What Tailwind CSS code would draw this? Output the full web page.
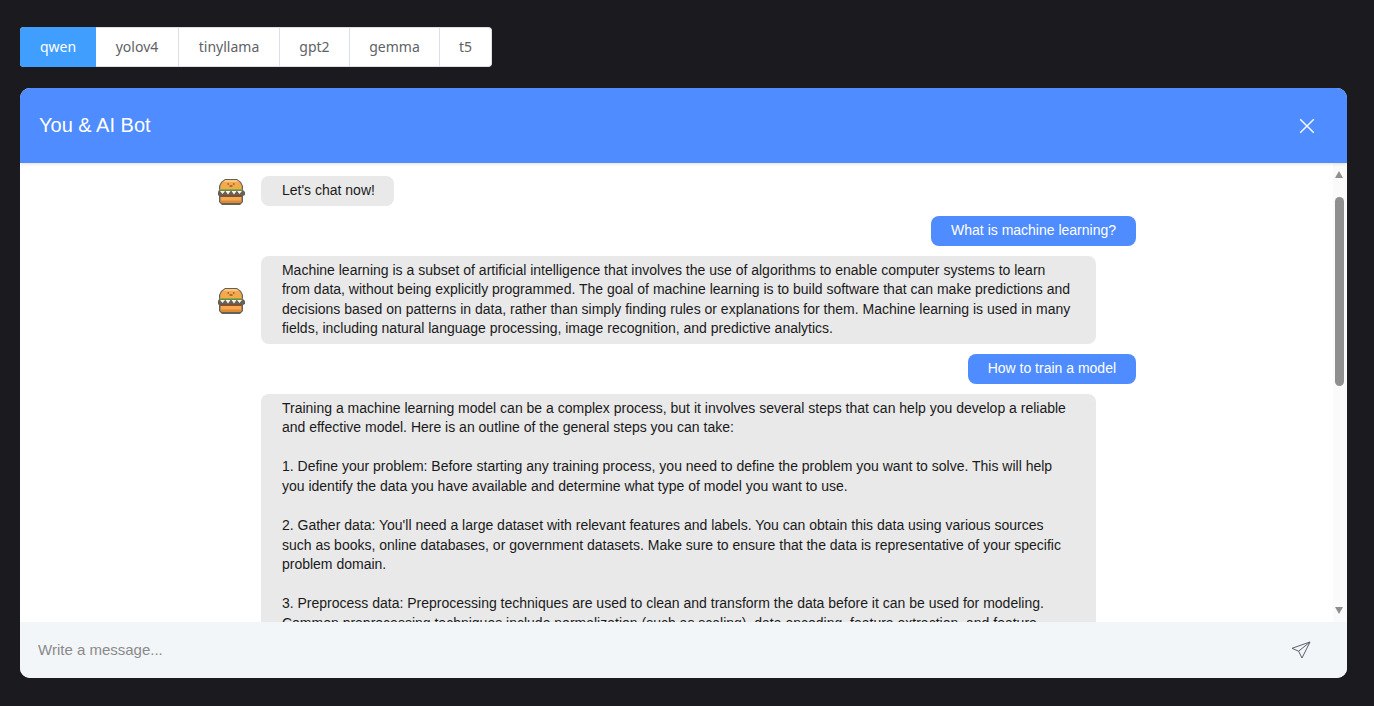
<!DOCTYPE html>
<html lang="en">
<head>
    <meta charset="UTF-8">
    <title>AI Bot Chat</title>
    <script src="https://cdn.jsdelivr.net/npm/@tailwindcss/browser@4"></script>
</head>
<body class="h-screen overflow-hidden bg-[#1a1a1f] pl-5 pr-[27px] pt-[27px] font-['Liberation_Sans',sans-serif]">
    <!-- model tabs -->
    <div class="flex w-fit h-10 rounded bg-white border border-[#dcdfe6] border-l-0 text-sm font-['Noto_Sans',sans-serif] text-[#606266]">
        <div class="flex items-center justify-center w-[76px] -my-px rounded-l bg-[#409eff] text-white">qwen</div>
        <div class="flex items-center justify-center w-[83px] border-r border-[#dcdfe6]">yolov4</div>
        <div class="flex items-center justify-center w-[101px] border-r border-[#dcdfe6]">tinyllama</div>
        <div class="flex items-center justify-center w-[70px] border-r border-[#dcdfe6]">gpt2</div>
        <div class="flex items-center justify-center w-[90px] border-r border-[#dcdfe6]">gemma</div>
        <div class="flex items-center justify-center w-[51px]">t5</div>
    </div>

    <!-- chat card -->
    <div class="mt-[21px] h-[590px] flex flex-col rounded-[10px] overflow-hidden bg-white">
        <div class="h-[75px] shrink-0 flex items-center justify-between pl-[19px] pr-8 bg-[#4f8cff] text-white text-xl shadow-[0_1px_3px_rgba(0,0,0,0.12)] z-10">
            <span class="-mt-0.5">You &amp; AI Bot</span>
            <svg width="16" height="16" viewBox="0 0 16 16" fill="none" stroke="white" stroke-width="1.4"><path d="M1.2 1.2 14.8 14.8M14.8 1.2 1.2 14.8"/></svg>
        </div>

        <div class="flex-1 min-h-0 flex">
            <div class="flex-1 min-w-0 overflow-hidden">
                <div class="w-[70%] mx-auto pt-[13px] flex flex-col gap-2.5 text-sm leading-[19.6px] text-[#1a1a1a]">
                    <div class="flex items-center">
                        <svg class="w-7 h-7 shrink-0 mr-4" viewBox="0 0 28 28">
                            <path fill="#66605a" d="M8 2h12l4 3 2 4v4l2 2v3l-2 1v6l-3 3H5l-3-3v-6l-1-1v-3l1-2V9l2-4z"/>
                            <path fill="#f6a94c" d="M8.5 3h11l3.5 2.5 1.8 3.500v3H3.200V9L5 5.500z"/>
                            <path fill="#fbc67f" d="M8.500 3h11l2.500 2H6z"/>
                            <path fill="#5a3a1c" d="M10.500 6.500h1.500v1h-1.500zM16 6.500h1.500v1H16zM12.500 8.500h3v1h-3z"/>
                            <path fill="#7fae3e" d="M2.500 12h23v1.500h-23z"/>
                            <path fill="#fdf6e6" d="M3 14h5l-2.500 3zM8.500 14h5L11 17.500zM14.500 14h5L17 17.500zM20 14h5l-2.500 3z"/>
                            <path fill="#8c4a24" d="M3.500 18h21v1.500h-21z"/>
                            <path fill="#f6a94c" d="M3.500 20h21v4.500L23 26H5l-1.500-1.500z"/>
                            <path fill="#dc8a35" d="M3.500 23.500h21v1L23 26H5l-1.500-1.500z"/>
                        </svg>
                        <div class="h-[30px] flex items-center rounded-lg bg-[#e9e9e9] pl-[21px] pr-[19px]">Let's chat now!</div>
                    </div>

                    <div class="self-end h-[30px] flex items-center rounded-lg bg-[#4f8cff] text-white px-5">What is machine learning?</div>

                    <div class="flex items-center pr-10">
                        <svg class="w-7 h-7 shrink-0 mr-4" viewBox="0 0 28 28">
                            <path fill="#66605a" d="M8 2h12l4 3 2 4v4l2 2v3l-2 1v6l-3 3H5l-3-3v-6l-1-1v-3l1-2V9l2-4z"/>
                            <path fill="#f6a94c" d="M8.5 3h11l3.5 2.5 1.8 3.500v3H3.200V9L5 5.500z"/>
                            <path fill="#fbc67f" d="M8.500 3h11l2.500 2H6z"/>
                            <path fill="#5a3a1c" d="M10.500 6.500h1.500v1h-1.500zM16 6.500h1.500v1H16zM12.500 8.500h3v1h-3z"/>
                            <path fill="#7fae3e" d="M2.500 12h23v1.500h-23z"/>
                            <path fill="#fdf6e6" d="M3 14h5l-2.500 3zM8.500 14h5L11 17.500zM14.500 14h5L17 17.500zM20 14h5l-2.500 3z"/>
                            <path fill="#8c4a24" d="M3.500 18h21v1.500h-21z"/>
                            <path fill="#f6a94c" d="M3.500 20h21v4.500L23 26H5l-1.500-1.500z"/>
                            <path fill="#dc8a35" d="M3.500 23.500h21v1L23 26H5l-1.500-1.500z"/>
                        </svg>
                        <div class="flex-1 rounded-lg bg-[#e9e9e9] pl-[21px] pr-[23px] pt-[4.6px] pb-[5.4px]">Machine learning is a subset of artificial intelligence that involves the use of algorithms to enable computer systems to learn from data, without being explicitly programmed. The goal of machine learning is to build software that can make predictions and decisions based on patterns in data, rather than simply finding rules or explanations for them. Machine learning is used in many fields, including natural language processing, image recognition, and predictive analytics.</div>
                    </div>

                    <div class="self-end h-[30px] flex items-center rounded-lg bg-[#4f8cff] text-white px-5 pb-px">How to train a model</div>

                    <div class="ml-11 mr-10 rounded-lg bg-[#e9e9e9] pl-[21px] pr-[23px] pt-[4.2px] pb-[5.8px] whitespace-pre-line">Training a machine learning model can be a complex process, but it involves several steps that can help you develop a reliable and effective model. Here is an outline of the general steps you can take:

1. Define your problem: Before starting any training process, you need to define the problem you want to solve. This will help you identify the data you have available and determine what type of model you want to use.

2. Gather data: You'll need a large dataset with relevant features and labels. You can obtain this data using various sources such as books, online databases, or government datasets. Make sure to ensure that the data is representative of your specific problem domain.

3. Preprocess data: Preprocessing techniques are used to clean and transform the data before it can be used for modeling. Common preprocessing techniques include normalization (such as scaling), data encoding, feature extraction, and feature selection.</div>
                </div>
            </div>

            <!-- scrollbar -->
            <div class="w-3.5 shrink-0 bg-[#fafafa] flex flex-col pl-0.5 pt-2 pb-2">
                <div class="w-0 h-0 border-x-[4.5px] border-x-transparent border-b-[7px] border-b-[#8f8f8f]"></div>
                <div class="w-[9px] h-[189px] mt-[19px] rounded-full bg-[#8f8f8f]"></div>
                <div class="mt-auto w-0 h-0 border-x-[4.5px] border-x-transparent border-t-[7px] border-t-[#8f8f8f]"></div>
            </div>
        </div>

        <!-- message input -->
        <div class="h-14 shrink-0 flex items-center justify-between pl-[18px] pr-9 bg-[#f3f6f9] text-[15px] text-[#8a8a8a]">
            <span>Write a message...</span>
            <svg width="20" height="20" viewBox="0 0 20 20" fill="none" stroke="#5c6066" stroke-width="1" stroke-linejoin="round"><path d="M19 2 1 8.300l6.600 2.900L11 18zM19 2 7.600 11.200"/></svg>
        </div>
    </div>
</body>
</html>
